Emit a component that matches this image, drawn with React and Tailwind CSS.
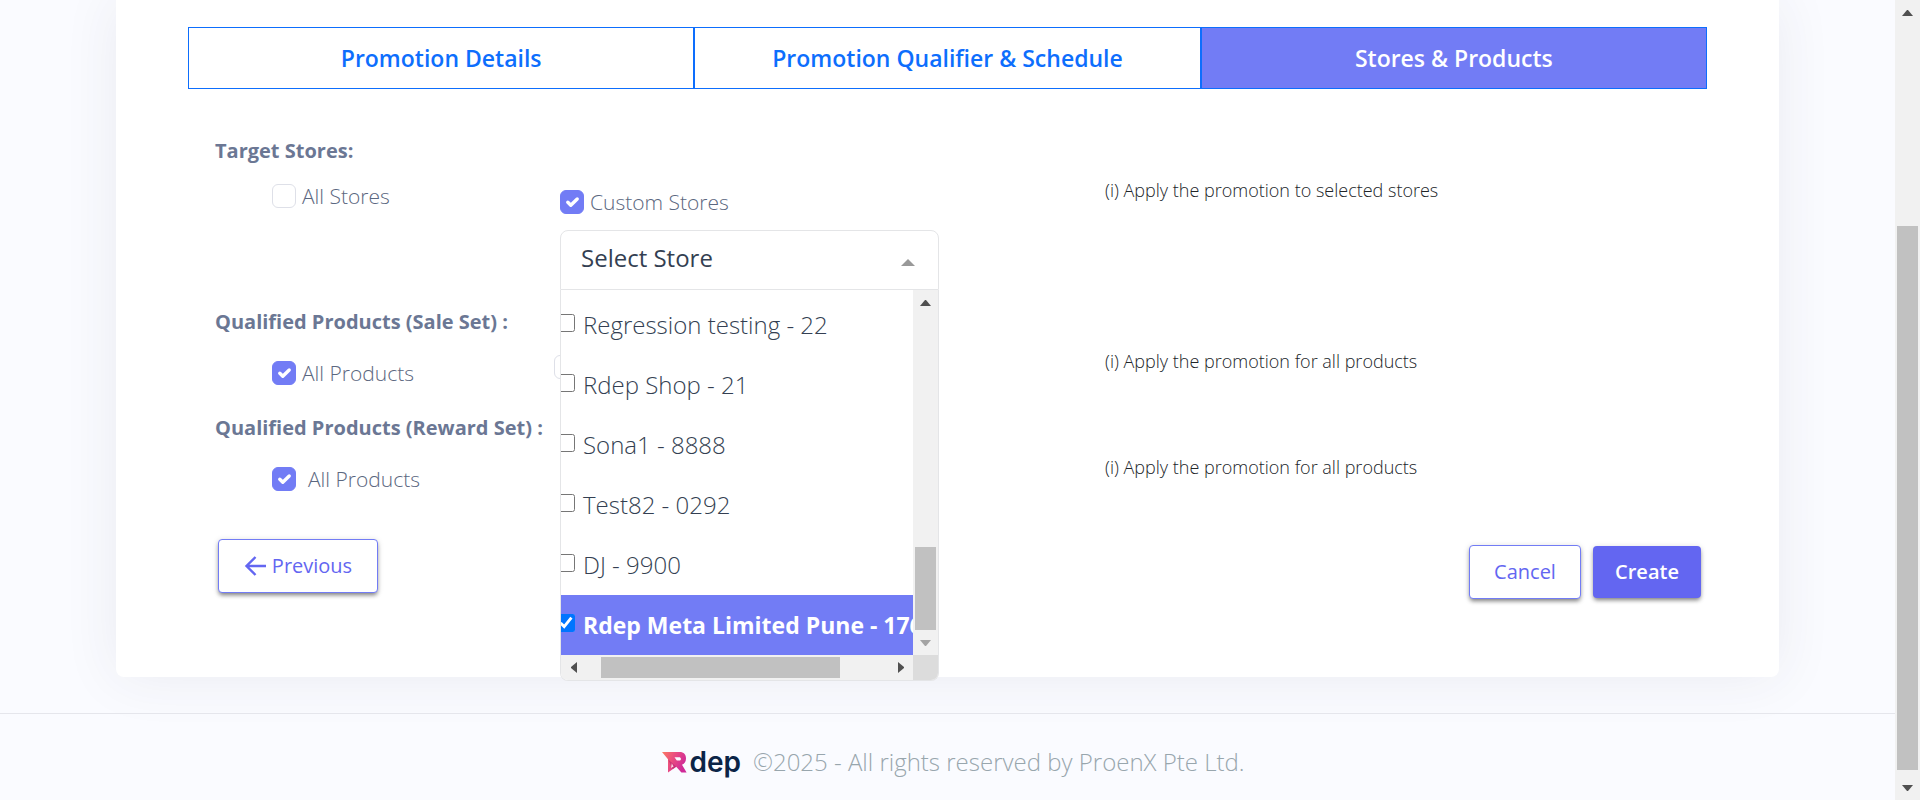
import { useState } from "react";

const TABS = ["Promotion Details", "Promotion Qualifier & Schedule", "Stores & Products"];

const STORES = [
  { name: "Regression testing - 22" },
  { name: "Rdep Shop - 21" },
  { name: "Sona1 - 8888" },
  { name: "Test82 - 0292" },
  { name: "DJ - 9900" },
  { name: "Rdep Meta Limited Pune - 1760", selected: true },
];

function Arrow({ direction, className = "text-[#505050]" }) {
  const points = {
    up: "0,6 11,6 6,0 5,0",
    down: "0,0 11,0 6,6 5,6",
    left: "6,0 6,11 0,6 0,5",
    right: "0,0 0,11 6,6 6,5",
  };
  const vertical = direction === "up" || direction === "down";
  return (
    <svg
      className={className}
      width={vertical ? 11 : 6}
      height={vertical ? 6 : 11}
      fill="currentColor"
      aria-hidden="true"
    >
      <polygon points={points[direction]} />
    </svg>
  );
}

function Box({ checked = false, name }) {
  return (
    <span className="grid size-6 shrink-0">
      <input
        type="checkbox"
        defaultChecked={checked}
        aria-label={name}
        className="peer size-6 appearance-none rounded-md border border-[#dee0e8] bg-white [grid-area:1/1] checked:border-[#727cf5] checked:bg-[#727cf5]"
      />
      <svg
        viewBox="0 0 24 24"
        className="pointer-events-none hidden size-6 text-white [grid-area:1/1] peer-checked:block"
        fill="none"
        stroke="currentColor"
        strokeWidth="3.4"
        strokeLinecap="round"
        strokeLinejoin="round"
        aria-hidden="true"
      >
        <path d="M7.8 12.2l3 3L17.2 9" />
      </svg>
    </span>
  );
}

function Check({ label, checked, wide = false }) {
  return (
    <label className={`flex items-center text-[21px]/6 font-light text-[#5b6780] ${wide ? "gap-3" : "gap-1.5"}`}>
      <Box checked={checked} />
      <span>{label}</span>
    </label>
  );
}

function Title({ children }) {
  return <h2 className="text-xl/[30px] font-bold text-[#6b7794]">{children}</h2>;
}

function Info({ children }) {
  return <p className="pt-3 text-lg/6 font-light text-[#212529]">{children}</p>;
}

function Row({ children }) {
  return <div className="grid grid-cols-[345fr_545fr_575fr] items-start">{children}</div>;
}

function StoreSelect() {
  const [open, setOpen] = useState(true);
  return (
    <div className="relative mt-4 w-[379px]">
      <button
        type="button"
        aria-expanded={open}
        onClick={() => setOpen(!open)}
        className="flex h-[60px] w-full items-center justify-between rounded-t-lg border border-[#e4e5e7] bg-white pr-[23px] pb-1 pl-5 text-2xl/8 text-[#343f52]"
      >
        <span>Select Store</span>
        <svg width="14" height="7" className="mt-2 text-[#999999]" fill="currentColor" aria-hidden="true">
          <polygon points="0,7 14,7 7,0" />
        </svg>
      </button>
      {open && (
        <div className="absolute inset-x-0 top-[60px] z-10 grid grid-cols-[1fr_25px] overflow-hidden rounded-b-lg border border-t-0 border-[#e4e5e7] bg-white">
          <ul className="overflow-hidden pt-[5px]">
            {STORES.map((store) => (
              <li key={store.name}>
                <label
                  className={`flex h-[60px] items-center gap-2 whitespace-nowrap ${
                    store.selected ? "bg-[#727cf5] text-[23px]/8 font-bold text-white" : "text-2xl/8 font-light text-[#343f52]"
                  }`}
                >
                  <input
                    type="checkbox"
                    defaultChecked={store.selected}
                    className="mb-1 -ml-1 size-[18px] shrink-0 accent-[#0075ff]"
                  />
                  {store.name}
                </label>
              </li>
            ))}
          </ul>
          <div className="flex flex-col items-center bg-[#f1f1f1]" aria-hidden="true">
            <div className="flex h-[25px] items-center">
              <Arrow direction="up" />
            </div>
            <div className="grow-[232]" />
            <div className="w-[21px] grow-[83] bg-[#c1c1c1]" />
            <div className="flex h-[25px] items-center">
              <Arrow direction="down" className="text-[#a3a3a3]" />
            </div>
          </div>
          <div className="flex h-[25px] items-center bg-[#f1f1f1]" aria-hidden="true">
            <div className="flex w-[25px] justify-center">
              <Arrow direction="left" />
            </div>
            <div className="grow-[15]" />
            <div className="h-[21px] grow-[239] bg-[#c1c1c1]" />
            <div className="grow-[48]" />
            <div className="flex w-[25px] justify-center">
              <Arrow direction="right" />
            </div>
          </div>
          <div className="bg-[#dcdcdc]" />
        </div>
      )}
    </div>
  );
}

function Logo() {
  return (
    <span className="flex items-center gap-0.5">
      <svg width="25" height="21" viewBox="0 0 25 21" aria-hidden="true">
        <defs>
          <linearGradient id="mark" x1="0" y1="0" x2="1" y2="0.4">
            <stop offset="0" stopColor="#fb7a63" />
            <stop offset="0.5" stopColor="#ea4c80" />
            <stop offset="1" stopColor="#cf2a98" />
          </linearGradient>
        </defs>
        <path
          d="M0 0H17.5C22 0 24 2.6 24 6.2C24 9.6 22.4 11.7 20 12.8L24.6 20.5H19.4L14.2 14.8L6 20.5V7.2Z M12.5 5.2L14.8 8.6H17C18.2 8.6 18.9 8 18.9 6.9C18.9 5.8 18.2 5.2 17 5.2Z"
          fill="url(#mark)"
          fillRule="evenodd"
        />
        <path d="M6 7.2L14.2 14.8L10.8 17.2Z" fill="#b51f6b" opacity="0.55" />
        <path d="M9.8 11.2L11.6 14.4L9 16Z" fill="#fbd3df" />
      </svg>
      <span className="font-['Inter'] text-[28px]/8 font-semibold text-[#0b2447]">dep</span>
    </span>
  );
}

const buttonShadow = "shadow-[0_3px_4px_-1px_rgba(0,0,0,0.45),0_1px_6px_rgba(0,0,0,0.14)]";

export default function App() {
  const [active, setActive] = useState(2);
  return (
    <div className="flex min-h-screen bg-[#fafbff] font-['Open_Sans',sans-serif]">
      <div className="flex min-w-0 flex-1 flex-col">
        <main className="mx-[116px] rounded-b-lg bg-white px-[72px] pt-[27px] pb-[78px] shadow-[0_0_56px_rgba(50,55,80,0.08)]">
          <nav className="flex">
            {TABS.map((tab, i) => (
              <button
                key={tab}
                type="button"
                onClick={() => setActive(i)}
                className={`h-[62px] flex-1 border border-[#0d6efd] text-[23px]/8 font-semibold ${
                  i === active ? "bg-[#727cf5] text-white" : "bg-white text-[#0d6efd]"
                }`}
              >
                {tab}
              </button>
            ))}
          </nav>

          <div className="px-[27px] pt-[47px]">
            <section>
              <Title>Target Stores:</Title>
              <Row>
                <div className="pt-[18px] pl-[57px]">
                  <Check label="All Stores" />
                </div>
                <div className="pt-6">
                  <Check label="Custom Stores" checked />
                  <StoreSelect />
                </div>
                <Info>(i) Apply the promotion to selected stores</Info>
              </Row>
            </section>

            <section className="pt-[17px]">
              <Title>Qualified Products (Sale Set) :</Title>
              <Row>
                <div className="pt-6 pl-[57px]">
                  <Check label="All Products" checked />
                </div>
                <div className="-ml-1.5 pt-[18px]">
                  <Box name="Custom Products" />
                </div>
                <Info>(i) Apply the promotion for all products</Info>
              </Row>
            </section>

            <section className="pt-7">
              <Title>Qualified Products (Reward Set) :</Title>
              <Row>
                <div className="pt-6 pl-[57px]">
                  <Check label="All Products" checked wide />
                </div>
                <div />
                <Info>(i) Apply the promotion for all products</Info>
              </Row>
            </section>
          </div>

          <div className="flex items-start justify-between pt-12 pr-1.5 pl-[30px] text-xl/6 font-medium">
            <button
              type="button"
              className={`flex h-[54px] w-40 items-center justify-center gap-1.5 rounded border border-[#727cf5] bg-white text-[#6366f1] ${buttonShadow}`}
            >
              <svg width="22" height="20" viewBox="0 0 22 20" fill="none" stroke="currentColor" strokeWidth="2.4" aria-hidden="true">
                <path d="M11.5 1L2.5 10L11.5 19M2.5 10H22" />
              </svg>
              Previous
            </button>
            <div className="flex items-center gap-3 pt-1.5">
              <button
                type="button"
                className={`h-[54px] w-28 rounded border border-[#727cf5] bg-white text-[#6366f1] ${buttonShadow}`}
              >
                Cancel
              </button>
              <button type="button" className={`h-[52px] w-[108px] rounded bg-[#6366f1] font-semibold text-white ${buttonShadow}`}>
                Create
              </button>
            </div>
          </div>
        </main>

        <footer className="mt-9 flex items-center justify-center gap-3 border-t border-[#e5e6ec] pt-8 pb-5 pl-3 text-2xl/8 font-light text-[#98a6ad]">
          <Logo />
          <p>©2025 - All rights reserved by ProenX Pte Ltd.</p>
        </footer>
      </div>

      <div className="flex w-[25px] shrink-0 flex-col items-center bg-[#f1f1f1]" aria-hidden="true">
        <div className="flex h-[25px] items-center">
          <Arrow direction="up" />
        </div>
        <div className="grow-[201]" />
        <div className="w-[21px] grow-[544] bg-[#c1c1c1]" />
        <div className="grow-[5]" />
        <div className="flex h-[25px] items-center">
          <Arrow direction="down" />
        </div>
      </div>
    </div>
  );
}
